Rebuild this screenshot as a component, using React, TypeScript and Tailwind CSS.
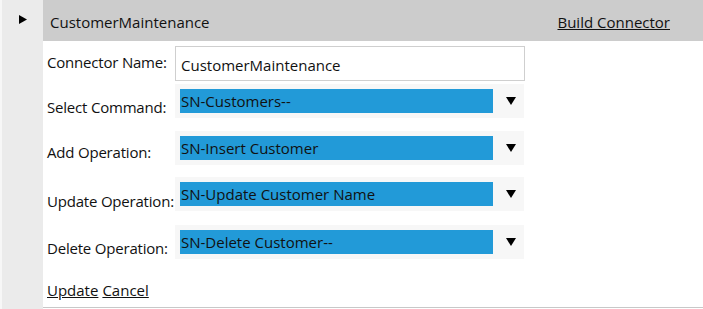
import React from "react";

const font = { fontFamily: '"Open Sans", "Noto Sans", sans-serif' };

// one dropdown row: label + grey wrapper with blue selected value + arrow
function SelectRow({ label, value, mt, lpt }: { label: string; value: string; mt: string; lpt: string }) {
  return (
    <div className={`flex items-start ${mt}`}>
      <div className={`w-[128px] ${lpt} text-[15px] tracking-[-0.2px] text-[#111] leading-[20px] whitespace-nowrap`}>{label}</div>
      <div className="w-[349px] h-[34px] bg-[#f7f7f7] flex items-center pl-[5px]">
        <div className="w-[313px] h-[24px] bg-[#229ad8] text-[15px] leading-[24px] text-[#111] pl-[1px] whitespace-nowrap">
          {value}
        </div>
        <svg width="10" height="8" viewBox="0 0 10 8" className="ml-[13px]">
          <path d="M0 0 H10 L5 8 Z" fill="#000" />
        </svg>
      </div>
    </div>
  );
}

export default function App() {
  return (
    <div className="flex w-[703px] h-[309px] bg-white" style={font}>
      {/* left gutter with expand arrow */}
      <div className="w-[43px] shrink-0 bg-[#ebebeb] border-l-2 border-[#f7f7f7] flex justify-center pt-[15px]">
        <svg width="8" height="9" viewBox="0 0 8 9">
          <path d="M0 0 L8 4.5 L0 9 Z" fill="#000" />
        </svg>
      </div>

      <div className="flex-1 flex flex-col border-b border-[#c8c8c8] mb-[1px]">
        <div className="h-[41px] shrink-0 bg-[#cccccc] flex items-center justify-between pl-[7px] pr-[33px] pt-[3px] text-[15px] text-[#111]">
          <span>CustomerMaintenance</span>
          <a className="underline cursor-pointer">Build Connector</a>
        </div>

        <div className="flex-1 flex flex-col pl-[4px]">
          <div className="flex items-start mt-[5px]">
            <div className="w-[128px] pt-[6px] text-[15px] tracking-[-0.2px] text-[#111] leading-[20px] whitespace-nowrap">Connector Name:</div>
            <div className="w-[350px] h-[35px] border border-[#cfcfcf] bg-white flex items-center pl-[5px] pt-[3px] text-[15px] text-[#111]">
              CustomerMaintenance
            </div>
          </div>

          <SelectRow label="Select Command:" value="SN-Customers--" mt="mt-[3px]" lpt="pt-[13px]" />
          <SelectRow label="Add Operation:" value="SN-Insert Customer" mt="mt-[13px]" lpt="pt-[11px]" />
          <SelectRow label="Update Operation:" value="SN-Update Customer Name" mt="mt-[12px]" lpt="pt-[14px]" />
          <SelectRow label="Delete Operation:" value="SN-Delete Customer--" mt="mt-[14px]" lpt="pt-[13px]" />

          <div className="mt-[20px] text-[15px] text-[#111] flex gap-[4px]">
            <a className="underline cursor-pointer">Update</a>
            <a className="underline cursor-pointer">Cancel</a>
          </div>
        </div>
      </div>
    </div>
  );
}
